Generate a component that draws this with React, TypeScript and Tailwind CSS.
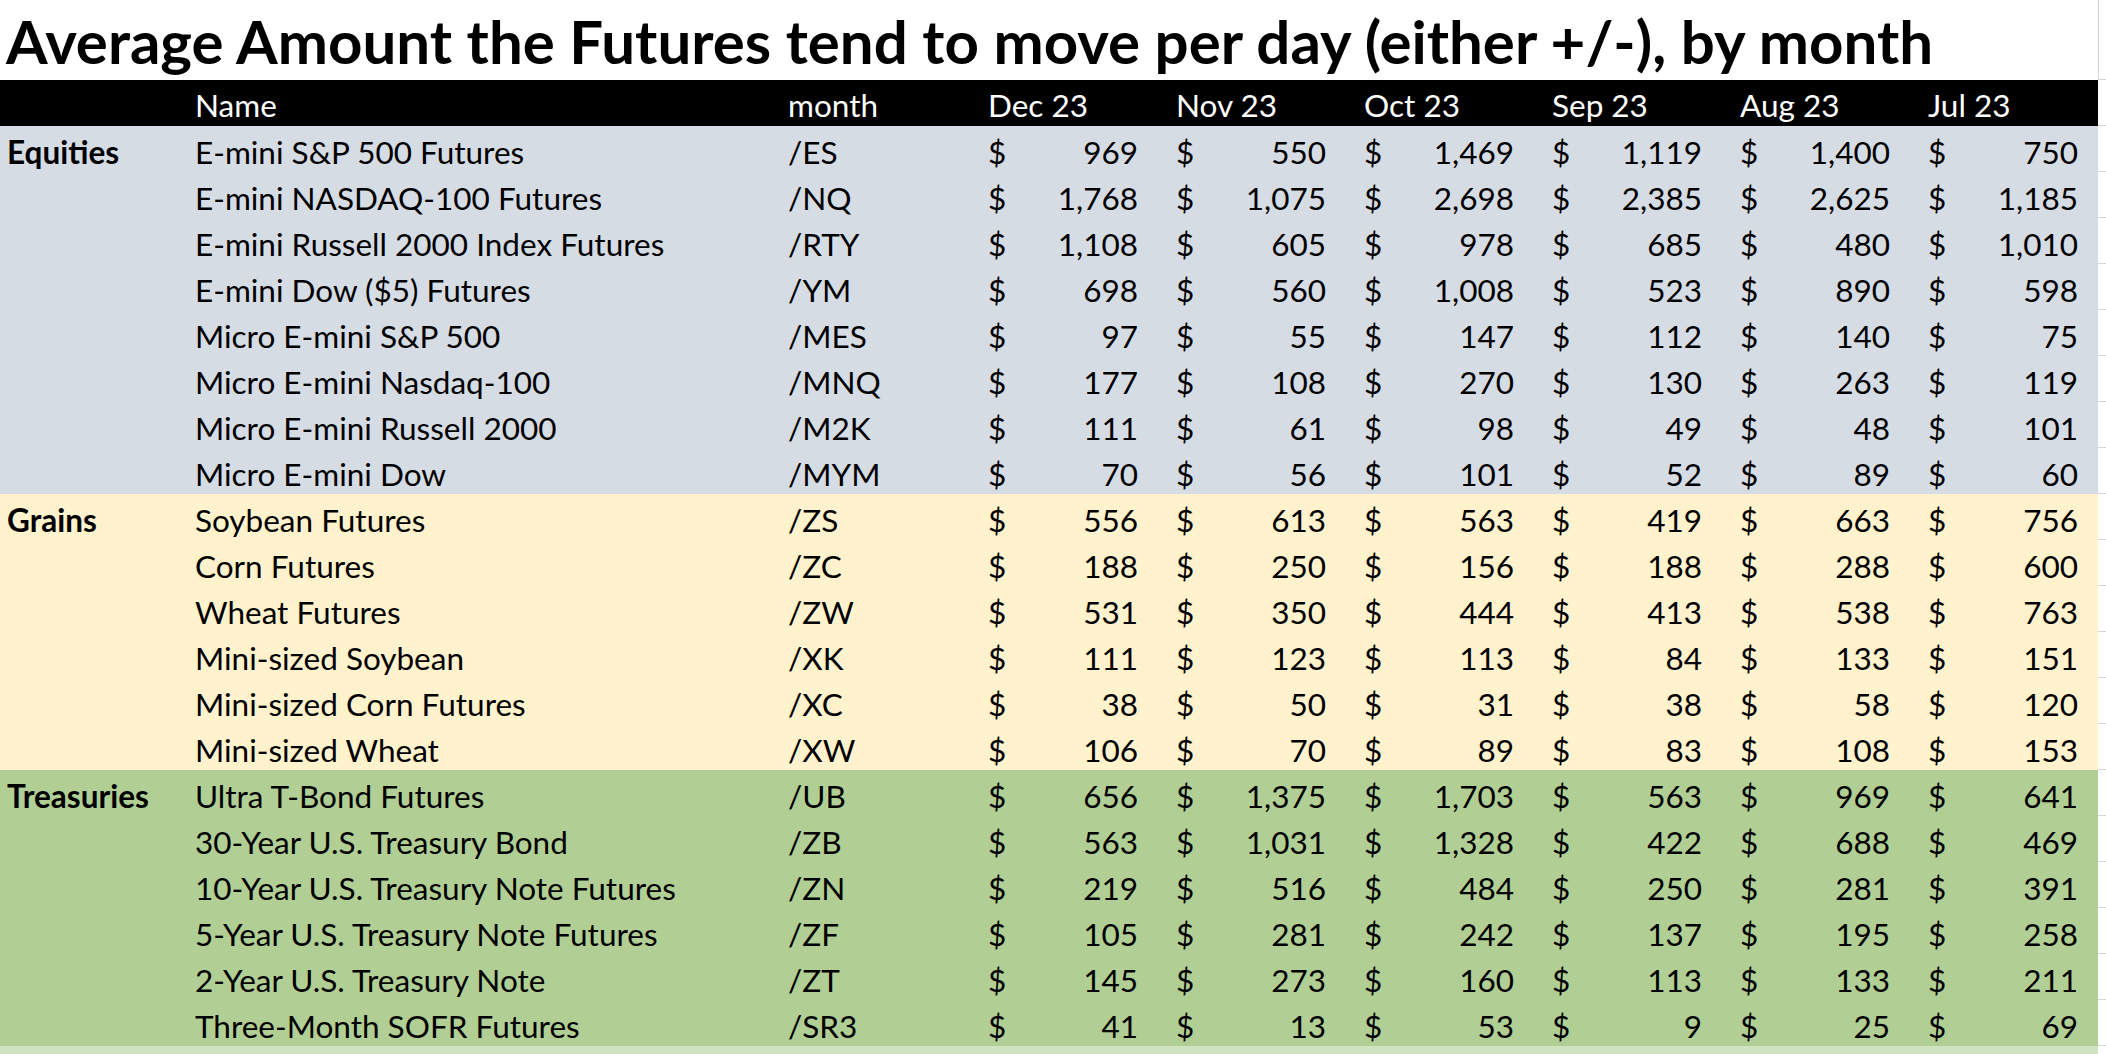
import React from "react";

type Row = { name: string; sym: string; vals: string[] };
type Group = { label: string; bg: string; rows: Row[] };

const months = ["Dec 23", "Nov 23", "Oct 23", "Sep 23", "Aug 23", "Jul 23"];

const groups: Group[] = [
  {
    label: "Equities",
    bg: "bg-[#d6dce4]",
    rows: [
      { name: "E-mini S&P 500 Futures", sym: "/ES", vals: ["969", "550", "1,469", "1,119", "1,400", "750"] },
      { name: "E-mini NASDAQ-100 Futures", sym: "/NQ", vals: ["1,768", "1,075", "2,698", "2,385", "2,625", "1,185"] },
      { name: "E-mini Russell 2000 Index Futures", sym: "/RTY", vals: ["1,108", "605", "978", "685", "480", "1,010"] },
      { name: "E-mini Dow ($5) Futures", sym: "/YM", vals: ["698", "560", "1,008", "523", "890", "598"] },
      { name: "Micro E-mini S&P 500", sym: "/MES", vals: ["97", "55", "147", "112", "140", "75"] },
      { name: "Micro E-mini Nasdaq-100", sym: "/MNQ", vals: ["177", "108", "270", "130", "263", "119"] },
      { name: "Micro E-mini Russell 2000", sym: "/M2K", vals: ["111", "61", "98", "49", "48", "101"] },
      { name: "Micro E-mini Dow", sym: "/MYM", vals: ["70", "56", "101", "52", "89", "60"] },
    ],
  },
  {
    label: "Grains",
    bg: "bg-[#fff2cc]",
    rows: [
      { name: "Soybean Futures", sym: "/ZS", vals: ["556", "613", "563", "419", "663", "756"] },
      { name: "Corn Futures", sym: "/ZC", vals: ["188", "250", "156", "188", "288", "600"] },
      { name: "Wheat Futures", sym: "/ZW", vals: ["531", "350", "444", "413", "538", "763"] },
      { name: "Mini-sized Soybean", sym: "/XK", vals: ["111", "123", "113", "84", "133", "151"] },
      { name: "Mini-sized Corn Futures", sym: "/XC", vals: ["38", "50", "31", "38", "58", "120"] },
      { name: "Mini-sized Wheat", sym: "/XW", vals: ["106", "70", "89", "83", "108", "153"] },
    ],
  },
  {
    label: "Treasuries",
    bg: "bg-[#b1cf95]",
    rows: [
      { name: "Ultra T-Bond Futures", sym: "/UB", vals: ["656", "1,375", "1,703", "563", "969", "641"] },
      { name: "30-Year U.S. Treasury Bond", sym: "/ZB", vals: ["563", "1,031", "1,328", "422", "688", "469"] },
      { name: "10-Year U.S. Treasury Note Futures", sym: "/ZN", vals: ["219", "516", "484", "250", "281", "391"] },
      { name: "5-Year U.S. Treasury Note Futures", sym: "/ZF", vals: ["105", "281", "242", "137", "195", "258"] },
      { name: "2-Year U.S. Treasury Note", sym: "/ZT", vals: ["145", "273", "160", "113", "133", "211"] },
      { name: "Three-Month SOFR Futures", sym: "/SR3", vals: ["41", "13", "53", "9", "25", "69"] },
    ],
  },
];

const grid = "grid w-[2098px] grid-cols-[195px_593px_182px_repeat(6,188px)] h-[46px] leading-none";

// empty gridline cells to the right of the filled table
function Strip() {
  return <div className="flex-1 border-b border-[#d4d4d4]" />;
}

export default function App() {
  return (
    <div
      className="w-[2106px] h-[1054px] overflow-hidden bg-white text-black text-[31.5px] flex flex-col"
      style={{ fontFamily: "Lato, 'Open Sans', sans-serif" }}
    >
      {/* Title */}
      <div className="flex h-[80px] shrink-0">
        <div className="w-[2098px] flex items-end pl-[6px]">
          <h1 className="text-[60px] font-bold leading-none pb-[9px]">
            Average Amount the Futures tend to move per day (either +/-), by month
          </h1>
        </div>
        <div className="flex-1 border-l border-b border-[#d4d4d4]" />
      </div>

      {/* Header */}
      <div className="flex shrink-0">
        <div className={`${grid} bg-black text-white items-end pb-[5px]`}>
          <div />
          <div>Name</div>
          <div>month</div>
          {months.map((m) => (
            <div key={m} className="pl-[18px]">{m}</div>
          ))}
        </div>
        <Strip />
      </div>

      {/* Body */}
      {groups.map((g) =>
        g.rows.map((r, i) => (
          <div key={r.sym} className="flex shrink-0">
            <div className={`${grid} ${g.bg} items-end pb-[4px]`}>
              <div className="pl-[7px] font-bold">{i === 0 ? g.label : ""}</div>
              <div>{r.name}</div>
              <div>{r.sym}</div>
              {r.vals.map((v, k) => (
                <div key={k} className="flex justify-between pl-[18px] pr-[20px]">
                  <span>$</span>
                  <span>{v}</span>
                </div>
              ))}
            </div>
            <Strip />
          </div>
        ))
      )}

      {/* Next (partial) row */}
      <div className="flex shrink-0">
        <div className="w-[2098px] h-[46px] bg-[#d0e3c1]" />
        <Strip />
      </div>
    </div>
  );
}
